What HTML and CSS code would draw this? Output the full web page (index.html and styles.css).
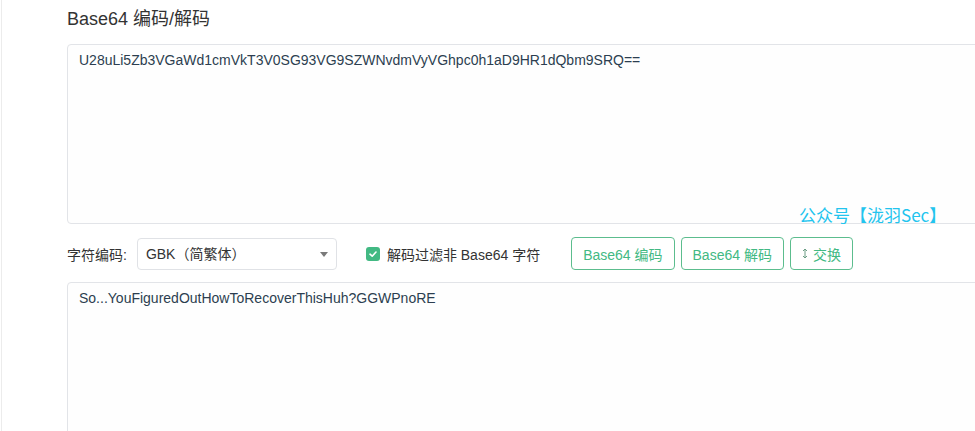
FILE: index.html
```html
<!DOCTYPE html>
<html lang="zh-CN">
<head>
    <meta charset="UTF-8">
    <title>Base64 编码/解码</title>
    <link rel="stylesheet" href="styles.css">
</head>
<body>
<div class="page">
    <h2 class="title">Base64 编码/解码</h2>
    <div class="editor">
        <textarea class="box box-top" spellcheck="false">U28uLi5Zb3VGaWd1cmVkT3V0SG93VG9SZWNvdmVyVGhpc0h1aD9HR1dQbm9SRQ==</textarea>
        <span class="watermark">公众号【泷羽Sec】</span>
    </div>
    <div class="toolbar">
        <span class="field-label">字符编码:</span>
        <div class="select">GBK（简繁体）<i class="caret"></i></div>
        <label class="check">
            <span class="check-box">
                <svg width="10" height="10" viewBox="0 0 10 10"><path d="M2 5.2 L4.2 7.2 L8 3" fill="none" stroke="#fff" stroke-width="1.6" stroke-linecap="round" stroke-linejoin="round"/></svg>
            </span>
            解码过滤非 Base64 字符
        </label>
        <a class="button" href="#">Base64 编码</a>
        <a class="button" href="#">Base64 解码</a>
        <a class="button" href="#">
            <svg class="swap-icon" width="6" height="11" viewBox="0 0 6 11"><path d="M3 1 V10 M1 3 L3 1 L5 3 M1 8 L3 10 L5 8" fill="none" stroke="#6a9c84" stroke-width="1"/></svg>
            交换
        </a>
    </div>
    <textarea class="box box-bottom" spellcheck="false">So...YouFiguredOutHowToRecoverThisHuh?GGWPnoRE</textarea>
</div>
</body>
</html>
```

FILE: styles.css
```css
html,body{
    width: 100%;
    height: 100%;
    margin: 0;
    padding: 0;
    overflow: hidden;
    background-color: #fff;
    font-family: "Liberation Sans", "Noto Sans CJK SC", sans-serif;
    color: #2c3e50;
}
.page{
    height: 100%;
    margin-left: 1px;
    border-left: 1px solid #ececec;
    padding-left: 65px;
    overflow: hidden;
}
.title{
    margin: 0;
    padding-top: 7px;
    height: 24px;
    line-height: 24px;
    font-size: 18px;
    font-weight: normal;
    color: #333;
    margin-bottom: 13px;
}
.editor{
    position: relative;
}
.box{
    display: block;
    box-sizing: border-box;
    width: 960px;
    margin: 0;
    padding: 5px 11px;
    border: 1px solid #e2e4e8;
    border-radius: 4px;
    background-color: #fefefe;
    font-family: "Liberation Sans", "Noto Sans CJK SC", sans-serif;
    font-size: 14px;
    line-height: 21px;
    color: #2c3e50;
    resize: none;
    outline: none;
}
.box-top{
    height: 180px;
}
.box-bottom{
    height: 160px;
}
.watermark{
    position: absolute;
    left: 732px;
    top: 161px;
    font-size: 17px;
    line-height: 20px;
    color: #22c4ee;
    font-family: "Noto Sans CJK SC", sans-serif;
}
.toolbar{
    display: flex;
    align-items: center;
    height: 33px;
    margin: 13px 0 12px;
    font-size: 14px;
}
.field-label{
    color: #333;
    margin-right: 10px;
}
.select{
    position: relative;
    box-sizing: border-box;
    width: 200px;
    height: 32px;
    line-height: 30px;
    padding-left: 8px;
    border: 1px solid #e0e2e6;
    border-radius: 4px;
    color: #333;
}
.caret{
    position: absolute;
    right: 8px;
    top: 13px;
    width: 0;
    height: 0;
    border-left: 4px solid transparent;
    border-right: 4px solid transparent;
    border-top: 5px solid #7a7a7a;
}
.check{
    display: flex;
    align-items: center;
    margin-left: 29px;
    color: #333;
}
.check-box{
    display: flex;
    align-items: center;
    justify-content: center;
    width: 14px;
    height: 14px;
    border-radius: 3px;
    background-color: #42b983;
    margin-right: 7px;
}
.button{
    display: flex;
    align-items: center;
    box-sizing: border-box;
    height: 33px;
    padding: 0 11px;
    margin-left: 6px;
    border: 1px solid #5cbd8e;
    border-radius: 4px;
    color: #42b983;
    text-decoration: none;
    font-size: 14px;
}
.check + .button{
    margin-left: 31px;
}
.swap-icon{
    margin-right: 5px;
}
```
